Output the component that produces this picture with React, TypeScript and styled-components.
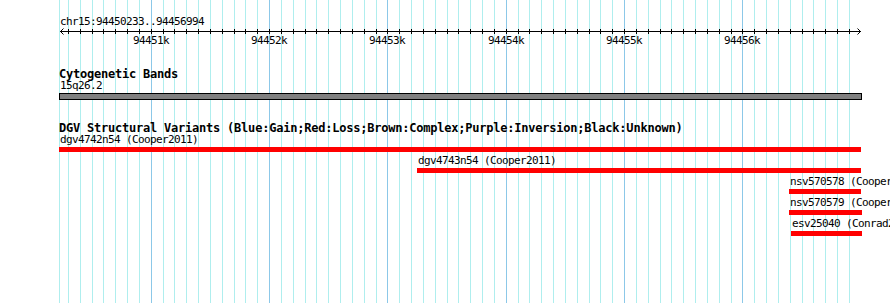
import React from "react";
import styled, { createGlobalStyle } from "styled-components";

const START = 94450233;
const END = 94456994;
const ORIGIN = 60;
const SPAN = 800;
const toX = (pos: number) => Math.round(ORIGIN + ((pos - START) * SPAN) / (END - START));

const minorPositions: number[] = [];
for (let p = Math.ceil(START / 100) * 100; p <= END; p += 100) minorPositions.push(p);
const majorPositions = minorPositions.filter((p) => p % 1000 === 0);

const GlobalStyle = createGlobalStyle`
  html, body {
    margin: 0;
    padding: 0;
    background: #ffffff;
    overflow: hidden;
  }
  #root {
    width: 890px;
    height: 303px;
  }
`;

const Canvas = styled.div`
  position: relative;
  width: 890px;
  height: 303px;
  overflow: hidden;
  background: #ffffff;
  color: #000000;
  font-family: "DejaVu Sans Mono", "Liberation Mono", monospace;
`;

const GridLayer = styled.svg`
  position: absolute;
  left: 0;
  top: 0;
  width: 890px;
  height: 303px;
  pointer-events: none;
`;

const Content = styled.div`
  position: relative;
  display: flex;
  flex-direction: column;
  padding-top: 17px;
`;

const SmallText = styled.div`
  font-size: 11px;
  line-height: 9px;
  height: 11px;
  letter-spacing: -0.62px;
  white-space: nowrap;
`;

const ChrLabel = styled(SmallText)`
  padding-left: 60px;
`;

const RulerSvg = styled.svg`
  display: block;
  width: 890px;
  height: 21px;
`;

const Track = styled.section<{ $gap: number }>`
  display: flex;
  flex-direction: column;
  margin-top: ${(p) => p.$gap}px;
  padding-left: 59px;
`;

const TrackTitle = styled.h2`
  margin: 0;
  font-size: 12px;
  font-weight: bold;
  line-height: 10px;
  height: 12px;
  letter-spacing: -0.22px;
  white-space: nowrap;
`;

const Rows = styled.div`
  display: flex;
  flex-direction: column;
  gap: 4px;
`;

const FeatureRow = styled.div`
  display: flex;
  flex-direction: column;
  align-items: flex-start;
`;

const FeatureLabel = styled(SmallText)`
  padding-left: 1px;
`;

const Bar = styled.div<{ $kind: "band" | "loss" }>`
  box-sizing: border-box;
  margin-top: 1px;
  height: ${(p) => (p.$kind === "band" ? 7 : 5)}px;
  background: ${(p) => (p.$kind === "band" ? "#808080" : "#ff0000")};
  border: ${(p) => (p.$kind === "band" ? "1px solid #000000" : "none")};
`;

const RulerLabel = styled.text`
  font-family: "DejaVu Sans Mono", "Liberation Mono", monospace;
  font-size: 11px;
  letter-spacing: -0.62px;
  fill: #000000;
`;

type Feature = { label: string; x: number; end: number };

const variants: Feature[] = [
  { label: "dgv4742n54 (Cooper2011)", x: 59, end: 861 },
  { label: "dgv4743n54 (Cooper2011)", x: 417, end: 861 },
  { label: "nsv570578 (Cooper2011)", x: 789, end: 861 },
  { label: "nsv570579 (Cooper2011)", x: 789, end: 862 },
  { label: "esv25040 (Conrad2009)", x: 791, end: 862 },
];

const TRACK_LEFT = 59;

function Grid() {
  return (
    <GridLayer viewBox="0 0 890 303" shapeRendering="crispEdges">
      <line x1={59.5} y1={0} x2={59.5} y2={303} stroke="#afeeee" />
      {minorPositions.map((p) => {
        const x = toX(p) + 0.5;
        const major = p % 1000 === 0;
        return (
          <line key={p} x1={x} y1={0} x2={x} y2={303} stroke={major ? "#8cc8e8" : "#afeeee"} strokeWidth={1} />
        );
      })}
    </GridLayer>
  );
}

function Ruler() {
  return (
    <RulerSvg viewBox="0 0 890 21">
      <g shapeRendering="crispEdges" stroke="#000000" strokeWidth={1}>
        <line x1={60} y1={3.5} x2={861} y2={3.5} />
        {minorPositions.map((p) => {
          const x = toX(p) + 0.5;
          return <line key={p} x1={x} y1={1} x2={x} y2={6} />;
        })}
      </g>
      <g stroke="#000000" strokeWidth={1} fill="none">
        <polyline points="63.5,0.5 60.5,3.5 63.5,6.5" />
        <polyline points="857.5,0.5 860.5,3.5 857.5,6.5" />
      </g>
      {majorPositions.map((p) => (
        <RulerLabel key={p} x={toX(p)} y={16} textAnchor="middle">
          {`${Math.round(p / 1000)}k`}
        </RulerLabel>
      ))}
    </RulerSvg>
  );
}

export default function App() {
  return (
    <>
      <GlobalStyle />
      <Canvas>
        <Grid />
        <Content>
          <ChrLabel>chr15:94450233..94456994</ChrLabel>
          <Ruler />
          <Track $gap={20}>
            <TrackTitle>Cytogenetic Bands</TrackTitle>
            <FeatureRow>
              <FeatureLabel>15q26.2</FeatureLabel>
              <Bar $kind="band" style={{ width: 862 - TRACK_LEFT }} />
            </FeatureRow>
          </Track>
          <Track $gap={23}>
            <TrackTitle>
              DGV Structural Variants (Blue:Gain;Red:Loss;Brown:Complex;Purple:Inversion;Black:Unknown)
            </TrackTitle>
            <Rows>
              {variants.map((f) => (
                <FeatureRow key={f.label} style={{ marginLeft: f.x - TRACK_LEFT }}>
                  <FeatureLabel>{f.label}</FeatureLabel>
                  <Bar $kind="loss" style={{ width: f.end - f.x }} />
                </FeatureRow>
              ))}
            </Rows>
          </Track>
        </Content>
      </Canvas>
    </>
  );
}
